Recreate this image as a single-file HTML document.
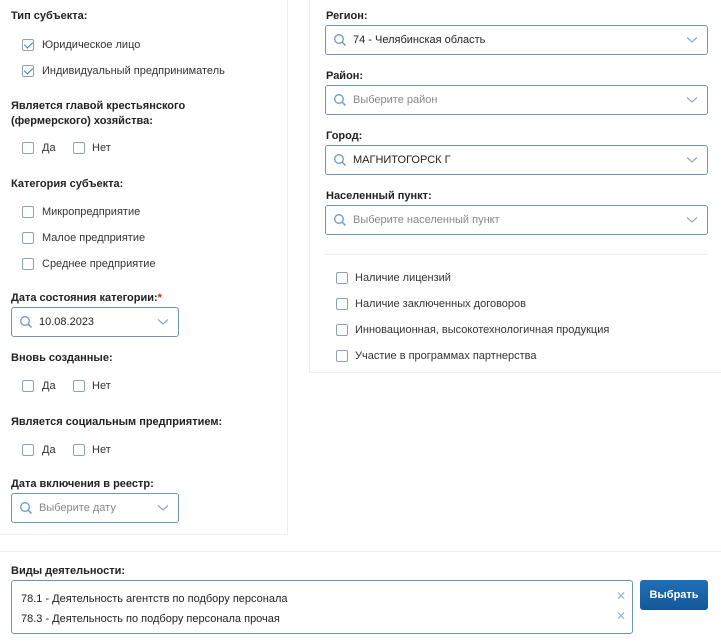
<!DOCTYPE html><html><head><meta charset="utf-8"><style>
*{margin:0;padding:0;box-sizing:border-box}
body{width:721px;height:642px;background:#fff;font-family:"Liberation Sans","DejaVu Sans",sans-serif;color:#222;position:relative;overflow:hidden;font-size:11px}
.a{position:absolute;white-space:nowrap}
.t,.l{margin-top:2px}
.l{font-weight:bold;font-size:11px;color:#222}
.cb{position:absolute;width:12px;height:12px;border:1px solid #8fa3b8;border-radius:2px;background:#fff;margin-top:1px}
.cb.on::after{content:"";position:absolute;left:3px;top:0px;width:4px;height:7px;border:solid #3a7ab8;border-width:0 1.5px 1.5px 0;transform:rotate(45deg)}
.t{font-size:11px;color:#333}
.inp{position:absolute;border:1px solid #6f94b6;border-radius:3px;background:#fff}
.inp .ic{position:absolute;left:7px;top:50%;margin-top:-7px}
.inp .tx{position:absolute;left:27px;top:50%;transform:translateY(-50%);font-size:11px;color:#222}
.inp .ph{color:#888}
.inp .ch{position:absolute;right:9px;top:50%;margin-top:-4px}
</style></head><body>
<div class="a" style="left:0;top:0;width:288px;height:535px;border-right:1px solid #eee;border-bottom:1px solid #eee"></div>
<div class="a" style="left:309px;top:0;width:412px;height:373px;border-left:1px solid #eee;border-bottom:1px solid #eee"></div>
<div class="a" style="left:0;top:551px;width:721px;border-top:1px solid #eee"></div>

<svg width="0" height="0" style="position:absolute"><defs>
<symbol id="s" viewBox="0 0 14 14"><circle cx="6" cy="6" r="4.3" fill="none" stroke="#6e9bc2" stroke-width="1.3"/><path d="M9 9l3.5 3.5" stroke="#6e9bc2" stroke-width="1.5"/></symbol>
<symbol id="c" viewBox="0 0 12 8"><path d="M1 1.5l5 4.5 5-4.5" fill="none" stroke="#8aa8c4" stroke-width="1.2"/></symbol>
</defs></svg>

<div class="a l" style="left:11px;top:8px">Тип субъекта:</div>
<div class="cb on" style="left:22px;top:38px"></div><div class="a t" style="left:42px;top:37px">Юридическое лицо</div>
<div class="cb on" style="left:22px;top:64px"></div><div class="a t" style="left:42px;top:63px">Индивидуальный предприниматель</div>
<div class="a l" style="left:11px;top:97px;line-height:15px">Является главой крестьянского<br>(фермерского) хозяйства:</div>
<div class="cb" style="left:22px;top:141px"></div><div class="a t" style="left:42px;top:140px">Да</div>
<div class="cb" style="left:73px;top:141px"></div><div class="a t" style="left:92px;top:140px">Нет</div>
<div class="a l" style="left:11px;top:176px">Категория субъекта:</div>
<div class="cb" style="left:22px;top:205px"></div><div class="a t" style="left:42px;top:204px">Микропредприятие</div>
<div class="cb" style="left:22px;top:231px"></div><div class="a t" style="left:42px;top:230px">Малое предприятие</div>
<div class="cb" style="left:22px;top:257px"></div><div class="a t" style="left:42px;top:256px">Среднее предприятие</div>
<div class="a l" style="left:11px;top:290px">Дата состояния категории:<span style="color:#d22">*</span></div>
<div class="inp" style="left:11px;top:307px;width:168px;height:30px"><svg class="ic" width="14" height="14"><use href="#s"/></svg><span class="tx">10.08.2023</span><svg class="ch" width="12" height="8"><use href="#c"/></svg></div>
<div class="a l" style="left:11px;top:350px">Вновь созданные:</div>
<div class="cb" style="left:22px;top:379px"></div><div class="a t" style="left:42px;top:378px">Да</div>
<div class="cb" style="left:73px;top:379px"></div><div class="a t" style="left:92px;top:378px">Нет</div>
<div class="a l" style="left:11px;top:414px">Является социальным предприятием:</div>
<div class="cb" style="left:22px;top:443px"></div><div class="a t" style="left:42px;top:442px">Да</div>
<div class="cb" style="left:73px;top:443px"></div><div class="a t" style="left:92px;top:442px">Нет</div>
<div class="a l" style="left:11px;top:476px">Дата включения в реестр:</div>
<div class="inp" style="left:11px;top:493px;width:168px;height:30px"><svg class="ic" width="14" height="14"><use href="#s"/></svg><span class="tx ph">Выберите дату</span><svg class="ch" width="12" height="8"><use href="#c"/></svg></div>

<div class="a l" style="left:326px;top:8px">Регион:</div>
<div class="inp" style="left:325px;top:25px;width:383px;height:30px"><svg class="ic" width="14" height="14"><use href="#s"/></svg><span class="tx">74 - Челябинская область</span><svg class="ch" width="12" height="8"><use href="#c"/></svg></div>
<div class="a l" style="left:326px;top:68px">Район:</div>
<div class="inp" style="left:325px;top:85px;width:383px;height:30px"><svg class="ic" width="14" height="14"><use href="#s"/></svg><span class="tx ph">Выберите район</span><svg class="ch" width="12" height="8"><use href="#c"/></svg></div>
<div class="a l" style="left:326px;top:128px">Город:</div>
<div class="inp" style="left:325px;top:145px;width:383px;height:30px"><svg class="ic" width="14" height="14"><use href="#s"/></svg><span class="tx">МАГНИТОГОРСК Г</span><svg class="ch" width="12" height="8"><use href="#c"/></svg></div>
<div class="a l" style="left:326px;top:188px">Населенный пункт:</div>
<div class="inp" style="left:325px;top:205px;width:383px;height:30px"><svg class="ic" width="14" height="14"><use href="#s"/></svg><span class="tx ph">Выберите населенный пункт</span><svg class="ch" width="12" height="8"><use href="#c"/></svg></div>
<div class="a" style="left:325px;top:254px;width:383px;border-top:1px solid #f0f0f0"></div>
<div class="cb" style="left:336px;top:271px"></div><div class="a t" style="left:355px;top:270px">Наличие лицензий</div>
<div class="cb" style="left:336px;top:297px"></div><div class="a t" style="left:355px;top:296px">Наличие заключенных договоров</div>
<div class="cb" style="left:336px;top:323px"></div><div class="a t" style="left:355px;top:322px">Инновационная, высокотехнологичная продукция</div>
<div class="cb" style="left:336px;top:349px"></div><div class="a t" style="left:355px;top:348px">Участие в программах партнерства</div>

<div class="a l" style="left:11px;top:563px">Виды деятельности:</div>
<div class="inp" style="left:11px;top:580px;width:622px;height:54px"></div>
<div class="a t" style="left:21px;top:591px;color:#222">78.1 - Деятельность агентств по подбору персонала</div>
<div class="a t" style="left:21px;top:611px;color:#222">78.3 - Деятельность по подбору персонала прочая</div>
<div class="a" style="left:616px;top:589px;color:#9bb5cc;font-size:12px">✕</div>
<div class="a" style="left:616px;top:609px;color:#9bb5cc;font-size:12px">✕</div>
<div class="a" style="left:640px;top:580px;width:68px;height:30px;background:linear-gradient(#1f6fb8,#15589a);border-radius:3px;color:#fff;font-weight:bold;font-size:11px;text-align:center;line-height:30px">Выбрать</div>
</body></html>
